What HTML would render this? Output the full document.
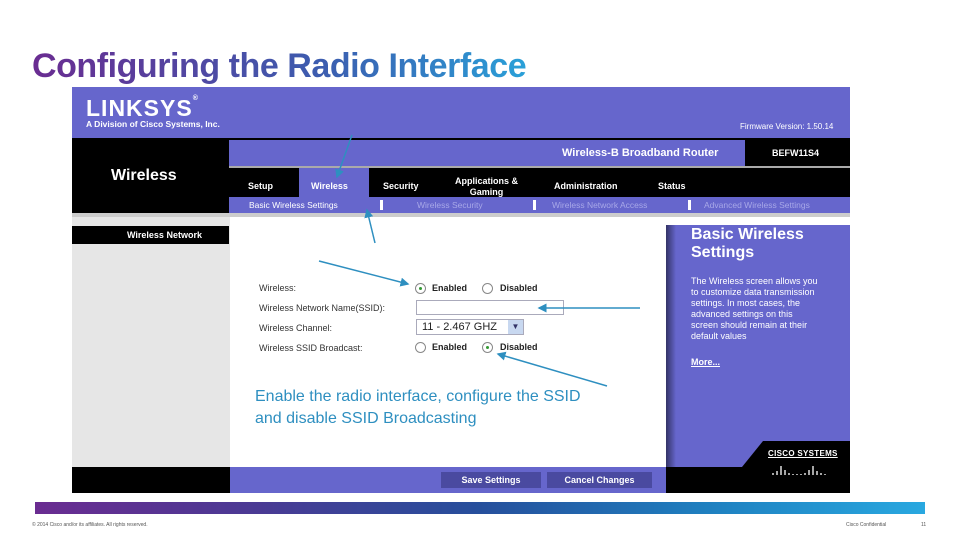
<!DOCTYPE html>
<html><head><style>
*{margin:0;padding:0;box-sizing:border-box}
body{width:960px;height:540px;background:#fff;position:relative;overflow:hidden;font-family:"Liberation Sans",Arial,sans-serif}
.a{position:absolute}
.t{font-weight:bold;color:#fff}
</style></head><body>
<div class="a" style="left:32px;top:47px;font-size:34px;font-weight:bold;letter-spacing:-0.45px;background:linear-gradient(90deg,#6a2c91,#3b5eb0 60%,#2aa0d8);-webkit-background-clip:text;background-clip:text;color:transparent;white-space:nowrap">Configuring the Radio Interface</div>

<div class="a" style="left:72px;top:87px;width:778px;height:406px;background:#000"></div>
<div class="a" style="left:72px;top:87px;width:778px;height:51px;background:#6666cc"></div>
<div class="a t" style="left:86px;top:95px;font-size:23px;letter-spacing:1px">LINKSYS<span style="font-size:7px;vertical-align:top">®</span></div>
<div class="a t" style="left:86px;top:119px;font-size:8.5px">A Division of Cisco Systems, Inc.</div>
<div class="a" style="left:740px;top:122px;font-size:8px;color:#fff">Firmware Version: 1.50.14</div>
<div class="a t" style="left:111px;top:167px;font-size:16px">Wireless</div>

<div class="a" style="left:229px;top:140px;width:516px;height:26px;background:#6666cc"></div>
<div class="a t" style="left:562px;top:147px;font-size:11px">Wireless-B Broadband Router</div>
<div class="a t" style="left:772px;top:148px;font-size:9px">BEFW11S4</div>
<div class="a" style="left:229px;top:166px;width:621px;height:2px;background:#aaa"></div>
<div class="a" style="left:299px;top:168px;width:70px;height:30px;background:#6666cc"></div>
<div class="a t" style="left:248px;top:181px;font-size:9px">Setup</div>
<div class="a t" style="left:311px;top:181px;font-size:9px">Wireless</div>
<div class="a t" style="left:383px;top:181px;font-size:9px">Security</div>
<div class="a t" style="left:455px;top:176px;font-size:9px;text-align:center;line-height:11px">Applications &amp;<br>Gaming</div>
<div class="a t" style="left:554px;top:181px;font-size:9px">Administration</div>
<div class="a t" style="left:658px;top:181px;font-size:9px">Status</div>
<div class="a" style="left:229px;top:197px;width:621px;height:16px;background:#6666cc"></div>
<div class="a" style="left:249px;top:200px;font-size:8.5px;color:#fff">Basic Wireless Settings</div>
<div class="a" style="left:380px;top:200px;width:3px;height:10px;background:#fff"></div>
<div class="a" style="left:417px;top:200px;font-size:8.5px;color:#a8a8e8">Wireless Security</div>
<div class="a" style="left:533px;top:200px;width:3px;height:10px;background:#fff"></div>
<div class="a" style="left:552px;top:200px;font-size:8.5px;color:#a8a8e8">Wireless Network Access</div>
<div class="a" style="left:688px;top:200px;width:3px;height:10px;background:#fff"></div>
<div class="a" style="left:704px;top:200px;font-size:8.5px;color:#a8a8e8">Advanced Wireless Settings</div>
<div class="a" style="left:72px;top:213px;width:778px;height:4px;background:#ccc"></div>

<div class="a" style="left:72px;top:217px;width:158px;height:250px;background:#e6e6e6"></div>
<div class="a" style="left:72px;top:226px;width:157px;height:18px;background:#000"></div>
<div class="a t" style="left:127px;top:230px;font-size:9px">Wireless Network</div>
<div class="a" style="left:230px;top:217px;width:620px;height:250px;background:#fff"></div>
<div class="a" style="left:666px;top:225px;width:184px;height:242px;background:#6666cc"></div>
<div class="a" style="left:666px;top:225px;width:10px;height:242px;background:linear-gradient(90deg,#333366,#6666cc)"></div>
<div class="a t" style="left:691px;top:226px;font-size:16px;line-height:18px">Basic Wireless<br>Settings</div>
<div class="a" style="left:691px;top:276px;font-size:9px;color:#fff;line-height:11px">The Wireless screen allows you<br>to customize data transmission<br>settings. In most cases, the<br>advanced settings on this<br>screen should remain at their<br>default values</div>
<div class="a t" style="left:691px;top:357px;font-size:9px;text-decoration:underline">More...</div>
<svg class="a" style="left:666px;top:420px" width="184" height="73"><polygon points="0,47 76,47 97,21 184,21 184,73 0,73" fill="#000"/></svg>
<div class="a t" style="left:768px;top:449px;font-size:8px;letter-spacing:0.3px;text-decoration:underline">CISCO SYSTEMS</div>
<svg class="a" style="left:769px;top:460px" width="62" height="17"><g stroke="#fff" stroke-width="1.3"><path d="M4 15v-2M8 15v-4M12 15v-9M16 15v-5M20 15v-2M24 15v-1M28 15v-1M32 15v-1M36 15v-2M40 15v-5M44 15v-9M48 15v-4M52 15v-2M56 15v-1"/></g></svg>

<div class="a" style="left:230px;top:467px;width:436px;height:26px;background:#6666cc"></div>
<div class="a t" style="left:441px;top:472px;width:100px;height:16px;background:#4a4aa0;font-size:9px;text-align:center;line-height:16px">Save Settings</div>
<div class="a t" style="left:547px;top:472px;width:105px;height:16px;background:#4a4aa0;font-size:9px;text-align:center;line-height:16px">Cancel Changes</div>

<div class="a" style="left:259px;top:278px;font-size:9px;color:#333;line-height:20px">Wireless:<br>Wireless Network Name(SSID):<br>Wireless Channel:<br>Wireless SSID Broadcast:</div>
<div class="a" style="left:415px;top:283px;width:11px;height:11px;border:1px solid #888;border-radius:50%"><div style="margin:3px;width:3px;height:3px;background:#393;border-radius:50%"></div></div>
<div class="a" style="left:432px;top:283px;font-size:9px;font-weight:bold;color:#222">Enabled</div>
<div class="a" style="left:482px;top:283px;width:11px;height:11px;border:1px solid #888;border-radius:50%"></div>
<div class="a" style="left:500px;top:283px;font-size:9px;font-weight:bold;color:#222">Disabled</div>
<div class="a" style="left:416px;top:300px;width:148px;height:15px;border:1px solid #aab"></div>
<div class="a" style="left:416px;top:319px;width:108px;height:16px;border:1px solid #aab;font-size:11px;color:#222;padding-left:5px;line-height:14px">11 - 2.467 GHZ</div>
<div class="a" style="left:508px;top:320px;width:15px;height:14px;background:#c8d8f0;color:#336;font-size:8px;text-align:center;line-height:14px">▼</div>
<div class="a" style="left:415px;top:342px;width:11px;height:11px;border:1px solid #888;border-radius:50%"></div>
<div class="a" style="left:432px;top:342px;font-size:9px;font-weight:bold;color:#222">Enabled</div>
<div class="a" style="left:482px;top:342px;width:11px;height:11px;border:1px solid #888;border-radius:50%"><div style="margin:3px;width:3px;height:3px;background:#393;border-radius:50%"></div></div>
<div class="a" style="left:500px;top:342px;font-size:9px;font-weight:bold;color:#222">Disabled</div>

<div class="a" style="left:255px;top:386px;font-size:16px;color:#2e8fc0;line-height:22px">Enable the radio interface, configure the SSID<br>and disable SSID Broadcasting</div>

<svg class="a" style="left:0;top:0" width="960" height="540"><defs><marker id="m" markerWidth="6" markerHeight="6" refX="5" refY="3" orient="auto"><path d="M0,0L6,3L0,6z" fill="#2e8fc0"/></marker></defs>
<g stroke="#2e8fc0" stroke-width="1.5" fill="none" marker-end="url(#m)">
<path d="M352 135L337 177"/><path d="M375 243L367 210"/><path d="M319 261L408 284"/><path d="M640 308L539 308"/><path d="M607 386L498 354"/></g></svg>

<div class="a" style="left:35px;top:502px;width:890px;height:12px;background:linear-gradient(90deg,#6a2c91,#4a3a94 25%,#264f9c 50%,#1f7fbf 75%,#29a8e0)"></div>
<div class="a" style="left:32px;top:522px;font-size:5px;color:#555">© 2014 Cisco and/or its affiliates. All rights reserved.</div>
<div class="a" style="left:846px;top:522px;font-size:5px;color:#555">Cisco Confidential</div>
<div class="a" style="left:921px;top:522px;font-size:5px;color:#555">11</div>
</body></html>
